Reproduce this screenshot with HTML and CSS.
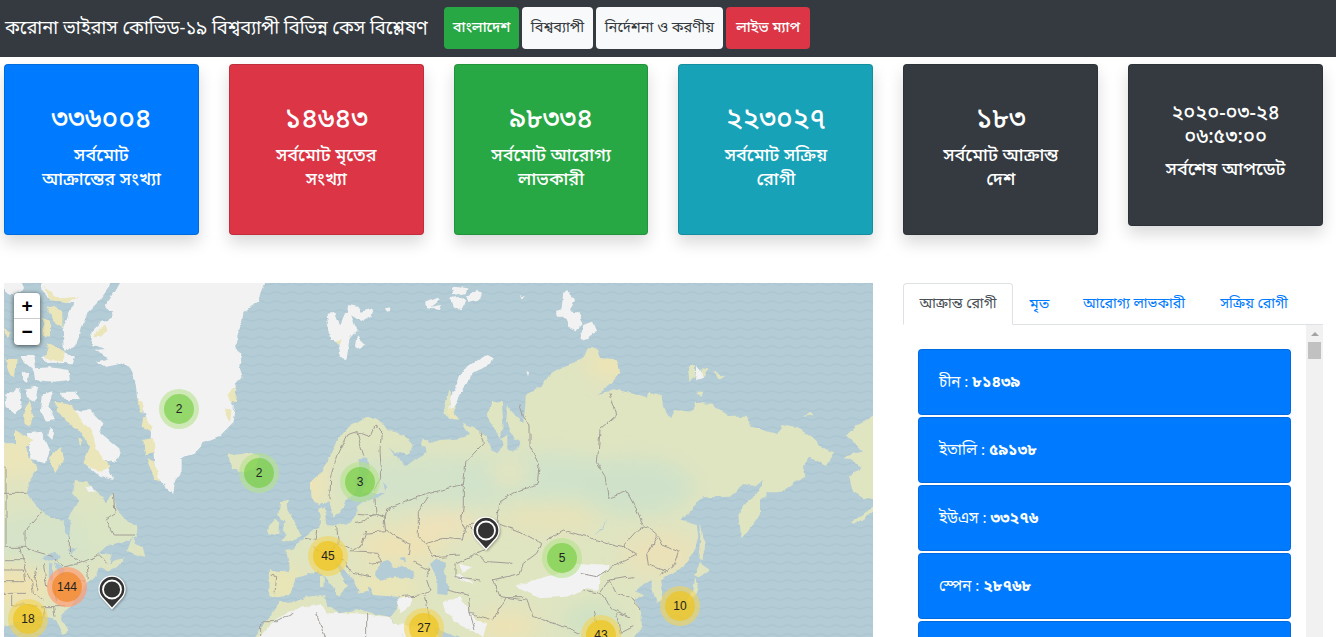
FILE: index.html
```html
<!DOCTYPE html>
<html lang="bn">
<head>
<meta charset="utf-8">
<title>করোনা ভাইরাস কোভিড-১৯</title>
<link rel="stylesheet" href="styles.css">
</head>
<body>
<nav class="navbar">
  <a class="brand">করোনা ভাইরাস কোভিড-১৯ বিশ্বব্যাপী বিভিন্ন কেস বিশ্লেষণ</a>
  <div class="buttons">
    <a class="btn btn-success w-a">বাংলাদেশ</a>
    <a class="btn btn-light w-b">বিশ্বব্যাপী</a>
    <a class="btn btn-light w-c">নির্দেশনা ও করণীয়</a>
    <a class="btn btn-danger w-d">লাইভ ম্যাপ</a>
  </div>
</nav>
<section class="cards">
  <div class="card blue"><h3>৩৩৬০০৪</h3><h5>সর্বমোট<br>আক্রান্তের সংখ্যা</h5></div>
  <div class="card red"><h3>১৪৬৪৩</h3><h5>সর্বমোট মৃতের<br>সংখ্যা</h5></div>
  <div class="card green"><h3>৯৮৩৩৪</h3><h5>সর্বমোট আরোগ্য<br>লাভকারী</h5></div>
  <div class="card teal"><h3>২২৩০২৭</h3><h5>সর্বমোট সক্রিয়<br>রোগী</h5></div>
  <div class="card dark"><h3>১৮৩</h3><h5>সর্বমোট আক্রান্ত<br>দেশ</h5></div>
  <div class="card dark short"><h5 class="stamp">২০২০-০৩-২৪<br>০৬:৫৩:০০</h5><h5>সর্বশেষ আপডেট</h5></div>
</section>
<main class="content">
  <div class="map">
    <svg class="world" viewBox="12 9 2607 1062" preserveAspectRatio="none">
      <defs>
        <pattern id="waves" width="48" height="27" patternUnits="userSpaceOnUse">
          <path d="M0 12Q12 6 24 12T48 12" fill="none" stroke="#a8c4d1" stroke-width="6" opacity=".5"/>
        </pattern>
        <filter id="rough" x="0" y="0" width="100%" height="100%" color-interpolation-filters="sRGB">
          <feTurbulence type="fractalNoise" baseFrequency=".035" numOctaves="3" seed="4"/>
          <feDisplacementMap in="SourceGraphic" scale="15" xChannelSelector="R" yChannelSelector="G"/>
        </filter>
        <filter id="soft" x="-50%" y="-50%" width="200%" height="200%"><feGaussianBlur stdDeviation="28"/></filter>
        <clipPath id="landclip"><use href="#land"/></clipPath>
      </defs>
      <rect width="2640" height="1080" fill="#b4ccd5"/>
      <rect width="2640" height="1080" fill="url(#waves)"/>
      <g filter="url(#rough)">
        <rect width="2640" height="1080" fill="none"/>
        <path id="land" fill="#dfe4c1" d="M0 490H75L85 530 115 565 92 600 80 640 120 690 155 715 190 720 195 755 210 775 215 735 205 715 220 690 235 660 220 640 225 600 265 605 290 640 320 665 340 640 348 685 380 725 412 742 410 768 370 785 320 797 290 825 335 818 328 850 375 835 350 862 325 870 300 862 285 892 250 920 222 965 195 995 183 1010 205 1055 190 1062 168 1020 120 1010 60 1025 0 1040Z
        M398 768L382 812 410 825 436 830 428 800 408 792Z
        M680 520L705 525 740 518 775 530 770 560 735 578 700 568Z
        M840 670L865 662 862 690 880 720 905 770 870 787 840 782 860 765 845 750 855 725 835 705Z M806 740L822 715 838 725 835 758 804 768Z
        M810 870L870 876 866 830 852 810 880 805 910 775 945 748 960 738 958 690 975 682 978 735 1010 738 1060 722 1070 680 1085 668 1125 655 1155 638 1085 640 1100 600 1108 560 1105 535 1075 538 1080 570 1065 600 1068 640 1035 665 1022 703 1000 712 985 660 960 675 932 655 930 608 970 570 995 520 1020 470 1055 432 1110 412 1150 430 1165 450 1210 465 1238 495 1225 525 1185 515 1165 500 1200 540 1215 562 1245 540 1280 515 1270 475 1290 490 1320 480 1370 476 1410 465 1388 428 1420 440 1460 470 1472 510 1492 520 1510 490 1460 410 1480 365 1505 362 1510 430 1500 480 1525 465 1525 512 1548 512 1560 490 1530 460 1518 420 1525 372 1540 400 1570 430 1575 385 1578 340 1625 320 1640 290 1700 255 1745 240 1760 205 1790 205 1800 235 1850 238 1857 280 1830 310 1795 345 1840 328 1890 338 1940 355 1945 335 1985 345 1990 385 2010 415 2022 390 2080 395 2085 365 2140 375 2190 410 2240 410 2255 440 2330 462 2345 435 2390 445 2430 465 2470 508 2505 520 2480 558 2430 530 2408 560 2420 590 2380 610 2340 640 2300 640 2280 660 2280 700 2260 730 2225 775 2215 710 2230 675 2270 645 2290 600 2260 620 2230 615 2190 650 2110 652 2070 690 2045 722 2090 735 2095 770 2085 810 2050 860 2010 882 1980 900 1990 960 1970 970 1955 920 1955 900 1920 920 1905 935 1930 942 1905 960 1925 1000 1925 1040 1900 1080H1220L1170 1010 1190 985 1195 950 1120 945 1105 915 1102 935 1080 940 1070 915 1035 865 1000 850 1030 895 1045 920 1010 945 995 915 955 872 920 885 890 892 870 945 830 952 808 945Z
        M760 1080L800 1020 840 965 880 968 920 950 975 945 982 978 1020 1000 1070 988 1170 1012 1215 1080Z
        M960 890L972 893 970 925 960 920Z M1005 940L1025 940 1018 950Z
        M2102 730L2115 800 2105 840 2095 835 2100 790Z M2100 850L2130 870 2095 892 2082 885Z M2085 895L2098 930 2070 965 2060 960 2080 930Z
        M2640 400L2570 435 2540 465 2585 515 2530 530 2585 560 2548 595 2560 635 2590 655 2640 665Z M2550 730L2600 695 2640 670 2619 697 2560 735Z
        M2060 260L2085 255 2085 290 2065 305Z M2105 265L2125 268 2115 290 2102 285Z M2138 275L2175 290 2160 298Z M2090 335L2110 335 2105 348Z M2412 410L2430 395 2445 405Z
        M1330 400L1348 330 1362 370 1365 400 1378 420 1350 415Z M1268 475L1285 480 1280 500 1262 498Z"/>
        <g clip-path="url(#landclip)">
          <g filter="url(#soft)">
            <ellipse cx="150" cy="780" rx="200" ry="90" fill="#d6e3c8"/>
            <ellipse cx="330" cy="740" rx="100" ry="80" fill="#dae5c5"/>
            <ellipse cx="50" cy="530" rx="120" ry="60" fill="#ece5b9"/>
            <ellipse cx="40" cy="920" rx="110" ry="65" fill="#efe2b1"/>
            <ellipse cx="1300" cy="610" rx="300" ry="80" fill="#d3e3c9"/>
            <ellipse cx="1620" cy="590" rx="270" ry="70" fill="#d0e3ca"/>
            <ellipse cx="1900" cy="620" rx="180" ry="85" fill="#cfe2c9"/>
            <ellipse cx="1330" cy="730" rx="100" ry="40" fill="#efe2ba"/>
            <ellipse cx="1530" cy="580" rx="60" ry="30" fill="#e8e4bc"/>
            <ellipse cx="1650" cy="715" rx="150" ry="35" fill="#e7e3b8"/>
            <ellipse cx="1200" cy="800" rx="130" ry="50" fill="#eee2b5"/>
            <ellipse cx="1150" cy="920" rx="110" ry="30" fill="#eee5b3"/>
            <ellipse cx="930" cy="610" rx="50" ry="80" fill="#eee4b7"/>
            <ellipse cx="1830" cy="250" rx="70" ry="45" fill="#eee4b5"/>
            <ellipse cx="1980" cy="820" rx="110" ry="60" fill="#ebe1b8"/>
            <ellipse cx="1780" cy="1020" rx="90" ry="50" fill="#cfe2c5"/>
            <ellipse cx="1520" cy="1040" rx="90" ry="40" fill="#efe2b4"/>
            <ellipse cx="850" cy="910" rx="60" ry="50" fill="#eae5b4"/>
          </g>
        </g>
        <g fill="#f2f2f2">
          <path d="M365 0L345 35 313 80 340 95 335 112 300 130 270 160 280 195 320 210 280 212 325 235 290 245 320 260 370 250 388 268 400 290 410 310 414 350 428 390 440 430 455 470 464 530 470 590 500 625 520 642 525 600 545 570 545 535 585 520 610 490 660 470 700 430 705 400 690 370 712 330 708 310 728 290 718 260 728 220 705 200 712 170 725 130 730 100 750 80 775 65 780 40 795 0Z"/>
          <path d="M120 0H335L325 25 300 60 265 95 245 140 240 165 222 205 192 212 188 150 205 105 220 70 150 60 125 35Z"/>
          <path d="M12 0L60 0 70 30 30 45 12 35Z M62 225L100 225 105 265 150 262 205 270 210 300 160 305 105 300 100 270 75 248Z M65 275L88 280 82 305 68 300Z M125 235L190 215 222 230 215 250 150 248Z M75 325L115 320 105 365 80 350Z M125 345L160 332 145 380 165 420 140 425 120 390Z M180 335L225 335 240 360 200 360Z M15 345L60 320 65 380 45 400 20 380Z M200 380L245 395 270 390 310 430 300 460 360 510 350 545 315 540 340 600 300 590 260 555 280 500 250 460Z M80 460L125 455 150 510 135 550 95 540Z M150 440L165 455 160 480 145 465Z M255 620L275 615 285 635 268 635Z"/>
          <path d="M980 105L1005 95 1020 135 1035 100 1050 95 1070 150 1050 175 1040 235 1022 230 1015 190 995 180 985 140Z M1045 75L1075 80 1085 95 1120 85 1115 110 1090 125 1060 110 1040 95Z M1070 165L1095 190 1080 210 1065 200Z M1155 85L1172 82 1170 90 1158 92Z"/>
          <path d="M1275 65L1310 50 1320 60 1295 80 1325 75 1320 90 1280 85Z M1355 20L1405 25 1400 40 1360 45Z M1350 55L1380 50 1400 62 1385 90 1360 80Z M1400 50L1430 30 1445 40 1440 60 1405 70Z M1560 45L1575 50 1565 55Z"/>
          <path d="M1345 385L1358 340 1380 290 1400 260 1460 225 1478 235 1470 255 1420 280 1390 320 1370 370 1350 395Z"/>
          <path d="M1690 40L1705 30 1722 60 1710 90 1735 95 1750 130 1730 152 1705 140 1690 110 1670 110 1668 90 1685 85Z M1740 180L1750 135 1775 125 1788 155 1760 175Z M1582 275L1590 280 1587 288Z M2090 255L2100 265 2112 290 2085 298Z"/>
          <path d="M1330 965L1380 950 1400 980 1430 1020 1460 1030 1450 1071 1380 1035 1340 1000Z M1545 920L1600 900 1700 875 1740 850 1830 855 1800 890 1795 930 1760 925 1700 950 1620 955Z M1365 890L1380 880 1430 920 1400 905Z M1190 960L1240 945 1230 980 1200 1000Z M1380 850L1410 862 1390 880Z"/>
          <path d="M775 1080L815 1030 860 1000 880 990 960 970 980 1000 1070 1000 1170 1012 1215 1080Z M1175 1030L1260 1040 1300 1080H1220Z"/>
        </g>
        <g fill="#ebe6b9">
          <path d="M285 155L315 135 325 145 300 170 280 172Z M412 355L428 370 428 400 418 395Z M430 410L455 435 450 450 425 440Z M430 480L460 475 465 520 435 525Z M440 535L464 545 480 605 465 598Z M682 345L710 320 705 370 690 365Z M675 385L695 390 690 425 678 405Z M130 20L180 55 240 50 200 70 150 60Z M140 80L160 75 190 100 190 145 160 120Z M130 110L150 130 150 170 130 165Z M145 190L195 215 185 245 135 235Z M15 240L50 240 45 290 30 285Z M12 145L35 155 20 175Z M165 365L215 375 250 430 275 450 290 510 330 560 300 575 250 550 270 500 240 450 205 430 170 390Z M70 400L90 360 100 410 90 440 70 430Z M45 450L100 480 80 500 45 490Z M150 530L180 500 190 540 165 580Z M235 475L248 480 240 500Z M95 170L115 165 120 195 100 190Z M1340 395L1352 380 1372 415 1355 412Z M1010 180L1025 178 1022 190 1010 190Z"/>
        </g>
        <g fill="#b4ccd5">
          <path d="M1128 885L1138 850 1165 840 1180 865 1210 855 1240 880 1245 895 1190 892 1140 902Z M1195 840L1215 830 1218 845Z M1290 855L1310 838 1340 845 1330 870 1345 920 1342 945 1312 942 1312 900Z M120 835L165 815 180 835 145 845Z M148 850L160 850 158 905 146 890Z M165 845L190 860 190 890 172 880Z M1150 610L1165 620 1155 635Z M1780 765L1810 745 1822 710 1812 750Z M1320 1080L1300 1040 1340 1060 1400 1080Z M200 810L235 805 215 820Z"/>
        </g>
        <g class="borders">
          <path d="M0 640H80M18 560V800M0 802H75L110 815 160 830 195 860 240 850 295 825 320 850M78 802V750L125 695M208 770V820L240 845M340 640L345 700 315 720 340 765H405M0 842H65M0 870H70L75 905H0M0 940H75M60 805L75 870 95 905 100 940 130 960M35 945V975H110M110 860L105 900 115 930M130 850L140 920M160 910L170 960M120 980H195M130 980L132 1015M160 975L165 1010M225 900H255M262 855L265 900M815 885L830 890 825 940"/>
          <path d="M990 655L992 590 1010 530 1040 465 1070 455 1092 530M1070 455L1110 470 1125 435 1145 450 1140 510 1145 590 1120 630M1125 655L1128 705 1070 700M1068 730L1090 725 1120 700 1155 712 1160 755 1090 760M1010 740L1015 790 1060 810 1085 795 1100 750M915 775L945 780 950 750M940 800L980 830 1010 790M980 830L1030 840 1060 880 1110 890M1050 815L1130 820 1145 845 1110 850M1160 690L1150 740 1180 765 1230 790 1225 825M1160 690L1230 660 1290 640 1390 612M1390 612L1398 545 1450 490 1440 455M1390 612V680L1385 720 1395 750M1285 650L1255 695 1255 770 1285 800"/>
          <path d="M1240 845L1290 870 1280 890M1280 790L1330 775 1390 780 1400 735 1470 725 1520 740 1560 755 1625 790 1610 820 1570 850 1560 880 1480 900 1500 950 1580 960 1600 1010 1720 1050 1740 1060M1560 370L1570 410 1590 435 1590 500 1620 560 1615 615 1560 630 1500 665 1490 730M1400 735L1470 800 1430 820 1365 850 1365 890 1440 900M1430 820L1460 845 1540 850M1285 800L1300 830 1380 825M1280 900L1290 930 1260 945 1195 950M1340 930L1405 945 1410 1000 1425 1050M1410 1000L1480 1020 1520 950 1570 950M1275 945L1290 1020M1740 765L1810 785 1870 800 1910 825 1830 865 1790 890 1740 880M1870 800L1915 750 1945 740 1970 760 1985 795 2035 815 2020 860 1980 885M1740 765L1690 750 1640 780M1830 340L1850 405 1800 450 1792 550 1815 590 1825 655 1880 635 1905 680 1930 740M1970 770L1940 820 1945 855 2000 875M1830 900L1850 940 1900 960 1920 990M1750 930L1800 940 1840 990 1890 1010M1800 940L1830 900 1900 890M950 1000L975 1080M1100 1000V1080M880 1000L830 1025H785V1071M1780 990L1790 1030M1850 1000L1860 1060 1900 1040"/>
        </g>
      </g>
    </svg>
    <div class="cluster small c1"><span>2</span></div>
    <div class="cluster small c2"><span>2</span></div>
    <div class="cluster small c3"><span>3</span></div>
    <div class="cluster medium c4"><span>45</span></div>
    <div class="cluster small c5"><span>5</span></div>
    <div class="cluster large c6"><span>144</span></div>
    <div class="cluster medium c7"><span>18</span></div>
    <div class="cluster medium c8"><span>27</span></div>
    <div class="cluster medium c9"><span>43</span></div>
    <div class="cluster medium c10"><span>10</span></div>
    <svg class="pin p1" viewBox="0 0 30 36"><path d="M15 33.500L5 22.500A13 13 0 1 1 25 22.500Z" fill="#333" stroke="#fff" stroke-width="1.300"/><circle cx="15" cy="14.500" r="9" fill="#333" stroke="#fff" stroke-width="1.800"/></svg>
    <svg class="pin p2" viewBox="0 0 30 36"><path d="M15 33.500L5 22.500A13 13 0 1 1 25 22.500Z" fill="#333" stroke="#fff" stroke-width="1.300"/><circle cx="15" cy="14.500" r="9" fill="#333" stroke="#fff" stroke-width="1.800"/></svg>
    <div class="zoom"><a>+</a><a>−</a></div>
  </div>
  <aside class="panel">
    <div class="tabs">
      <a class="tab t1 active">আক্রান্ত রোগী</a><a class="tab t2">মৃত</a><a class="tab t3">আরোগ্য লাভকারী</a><a class="tab t4">সক্রিয় রোগী</a>
    </div>
    <div class="scroller">
      <div class="list">
        <div class="row">চীন : <b>৮১৪৩৯</b></div>
        <div class="row">ইতালি : <b>৫৯১৩৮</b></div>
        <div class="row">ইউএস : <b>৩৩২৭৬</b></div>
        <div class="row">স্পেন : <b>২৮৭৬৮</b></div>
        <div class="row"></div>
      </div>
      <div class="bar"><i class="arrow"></i><i class="thumb"></i></div>
    </div>
  </aside>
</main>
</body>
</html>
```
FILE: styles.css
```css
* { box-sizing: border-box; }
body {
  margin: 0;
  height: 637px;
  overflow: hidden;
  background: #fff;
  color: #212529;
  font: 16px/24px "Noto Sans Bengali", "Noto Serif Bengali", "Liberation Sans", sans-serif;
}
h3, h5 { margin: 0 0 8px; font-weight: 500; white-space: nowrap; }
.navbar { height: 57px; background: #343a40; display: flex; align-items: center; padding: 0 5px 1px; }
.brand { width: 439px; padding-top: 2px; color: #fff; font-size: 18.35px; white-space: nowrap; }
.buttons { display: flex; gap: 3px; }
.btn { height: 42px; border-radius: 4px; line-height: 44px; text-align: center; white-space: nowrap; font-size: 14.6px; }
.btn-success { background: #28a745; color: #fff; font-weight: 500; }
.btn-light { background: #f8f9fa; color: #343a40; }
.btn-danger { background: #dc3545; color: #fff; font-weight: 500; }
.w-a { width: 75px; }
.w-b { width: 71px; }
.w-c { width: 127px; }
.w-d { width: 84px; }
.cards { display: grid; grid-template-columns: repeat(6, 1fr); column-gap: 30px; align-items: start; padding: 7px 13px 0 4px; height: 226px; }
.card { height: 171px; padding-top: 39px; border: 1px solid rgba(0,0,0,.125); border-radius: 4px; color: #fff; text-align: center; box-shadow: 0 8px 16px rgba(0,0,0,.15); }
.card h3 { font-size: 28px; line-height: 34px; margin-bottom: 6px; }
.card h5 { font-size: 18px; line-height: 24px; }
.card .stamp { font-size: 20px; }
.blue { background: #007bff; }
.red { background: #dc3545; }
.green { background: #28a745; }
.teal { background: #17a2b8; }
.dark { background: #343a40; }
.short { height: 162px; padding-top: 37px; }
.content { display: flex; gap: 30px; padding-left: 4px; height: 354px; }
.map { position: relative; width: 869px; height: 354px; overflow: hidden; }
.world { display: block; width: 869px; height: 354px; }
.borders { fill: none; stroke: #a29d96; stroke-width: 3; }
.cluster { position: absolute; width: 40px; height: 40px; padding: 5px; border-radius: 50%; }
.cluster span { display: block; height: 30px; border-radius: 50%; text-align: center; font: 12px/30px "Liberation Sans", Arial, sans-serif; color: #222; }
.small { background: rgba(181,226,140,.6); }
.small span { background: rgba(110,204,57,.6); }
.medium { background: rgba(241,211,87,.6); }
.medium span { background: rgba(240,194,12,.6); }
.large { background: rgba(253,156,115,.7); }
.large span { background: rgba(241,128,23,.6); }
.c1 { left: 155px; top: 106px; }
.c2 { left: 235px; top: 170px; }
.c3 { left: 336px; top: 179px; }
.c4 { left: 304px; top: 253px; }
.c5 { left: 538px; top: 255px; }
.c6 { left: 43px; top: 284px; }
.c7 { left: 4px; top: 316px; }
.c8 { left: 400px; top: 325px; }
.c9 { left: 577px; top: 332px; }
.c10 { left: 656px; top: 303px; }
.pin { position: absolute; width: 30px; height: 36px; filter: drop-shadow(1px 1px 1px rgba(0,0,0,.3)); }
.p1 { left: 467px; top: 233px; }
.p2 { left: 93px; top: 292px; }
.zoom { position: absolute; left: 10px; top: 10px; width: 26px; border-radius: 4px; background: #fff; box-shadow: 0 1px 5px rgba(0,0,0,.65); }
.zoom a { display: block; height: 26px; text-align: center; font: bold 19px/26px "Liberation Sans", Arial, sans-serif; color: #000; }
.zoom a:first-child { border-bottom: 1px solid #ccc; }
.panel { width: 420px; }
.tabs { display: flex; height: 42px; border-bottom: 1px solid #dee2e6; }
.tab { height: 42px; padding-top: 1px; line-height: 42px; text-align: center; color: #007bff; white-space: nowrap; font-size: 14.2px; }
.active { padding-top: 0; border: 1px solid #dee2e6; border-bottom-color: #fff; border-radius: 4px 4px 0 0; color: #495057; }
.t1 { width: 110px; }
.t2 { width: 53px; font-size: 15px; }
.t3 { width: 136px; }
.t4 { width: 104px; }
.scroller { display: flex; height: 312px; overflow: hidden; }
.list { width: 403px; padding: 24px 15px 0; }
.row { height: 66px; margin-bottom: 2px; padding: 21px 20px; line-height: 24px; font-size: 15.2px; border: 1px solid rgba(0,0,0,.125); border-radius: 4px; background: #007bff; color: #fff; white-space: nowrap; }
.row b { font-size: 15.7px; }
.bar { width: 17px; background: #f1f1f1; display: flex; flex-direction: column; align-items: center; }
.arrow { margin-top: 7px; border: 4px solid transparent; border-top: 0; border-bottom-color: #a3a3a3; }
.thumb { margin-top: 6px; width: 13px; height: 17px; background: #c1c1c1; }
```
